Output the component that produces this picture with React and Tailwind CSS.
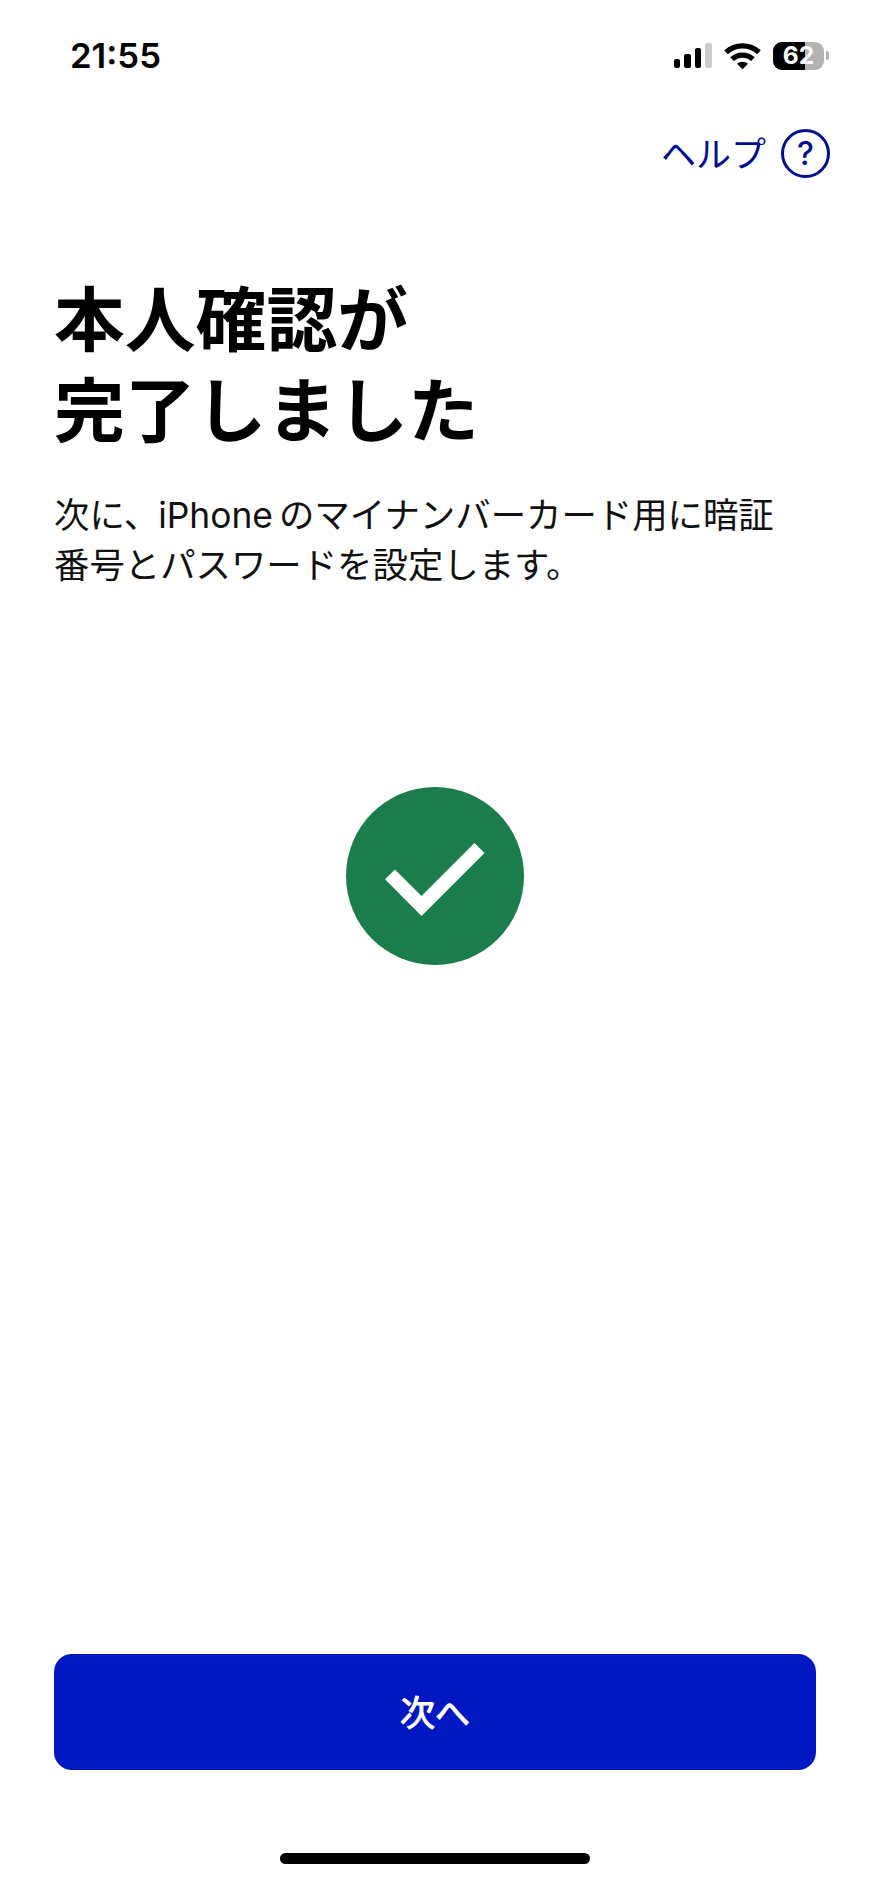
import clsx from "clsx";

const SIGNAL_BARS = [
  { height: "h-[9px]", active: true },
  { height: "h-[14px]", active: true },
  { height: "h-5", active: true },
  { height: "h-[25px]", active: false },
];

function WifiIcon() {
  return (
    <svg width="37" height="28" viewBox="0 0 37 28" fill="none" stroke="black">
      <path d="M2 10.3a24.5 24.5 0 0 1 33 0" strokeWidth="5.4" />
      <path d="M8 17.1a15.6 15.6 0 0 1 21 0" strokeWidth="5.2" />
      <path d="M18.5 27.2l-5.6-5.5a8.6 8.6 0 0 1 11.2 0z" fill="black" stroke="none" />
    </svg>
  );
}

function Battery({ level }) {
  return (
    <div className="flex items-center gap-[2px]">
      <div className="relative flex h-7 w-[51px] items-center justify-center overflow-hidden rounded-[9px] bg-[#b3b3b3]">
        <div className="absolute inset-y-0 left-0 bg-black" style={{ width: `${level}%` }} />
        <span className="relative text-[24.5px] leading-none font-bold text-white">{level}</span>
      </div>
      <div className="h-[9px] w-[3px] rounded-r-full bg-[#b3b3b3]" />
    </div>
  );
}

function StatusBar() {
  return (
    <div className="flex h-[111px] items-center justify-between pr-[41px] pl-[70px]">
      <span className="text-[34.7px] leading-none font-semibold">21:55</span>
      <div className="flex items-center">
        <div className="mr-3 flex items-end gap-1">
          {SIGNAL_BARS.map(({ height, active }) => (
            <div
              key={height}
              className={clsx("w-[6.6px] rounded-[2px]", height, active ? "bg-black" : "bg-[#cccccc]")}
            />
          ))}
        </div>
        <WifiIcon />
        <div className="ml-3">
          <Battery level={62} />
        </div>
      </div>
    </div>
  );
}

function HelpButton() {
  return (
    <button className="flex items-center gap-[15px] text-[#00118f]">
      <span className="pt-[2px] text-[35px] leading-none">ヘルプ</span>
      <span className="flex size-[49px] items-center justify-center rounded-full border-[3px] text-[32px] leading-none font-medium">
        ?
      </span>
    </button>
  );
}

function CheckMark() {
  return (
    <svg width="178" height="178" viewBox="0 0 178 178">
      <circle cx="89" cy="89" r="89" fill="#1b7c4c" />
      <path d="M39 92.3l9.9-9.7 26.6 26.4 53-53 10 9.9-63 63.1z" fill="white" />
    </svg>
  );
}

export default function App() {
  return (
    <div className="flex h-[1882px] w-[870px] flex-col bg-white font-['Inter','Noto_Sans_CJK_JP',sans-serif] text-black">
      <StatusBar />

      <header className="flex h-[85px] items-center justify-end pr-10">
        <HelpButton />
      </header>

      <main className="flex flex-1 flex-col pl-[54px]">
        <h1 className="mt-[79px] text-[70.8px] leading-[91px] font-bold">
          本人確認が
          <br />
          完了しました
        </h1>
        <p className="mt-[34px] text-[35.4px] leading-[50px] whitespace-nowrap text-[#111111]">
          次に、<span className="-ml-px mr-[6px]">iPhone</span>のマイナンバーカード用に暗証
          <br />
          番号とパスワードを設定します。
        </p>
        <div className="mt-[196px] flex justify-center pr-[54px]">
          <CheckMark />
        </div>
      </main>

      <footer className="flex flex-col items-center px-[54px] pb-[18px]">
        <button className="h-[116px] w-full rounded-[18px] bg-[#0017c1] pt-[2px] text-[35px] font-normal text-white [-webkit-text-stroke:1px_white]">
          次へ
        </button>
        <div className="mt-[83px] h-[11px] w-[310px] rounded-full bg-black" />
      </footer>
    </div>
  );
}
